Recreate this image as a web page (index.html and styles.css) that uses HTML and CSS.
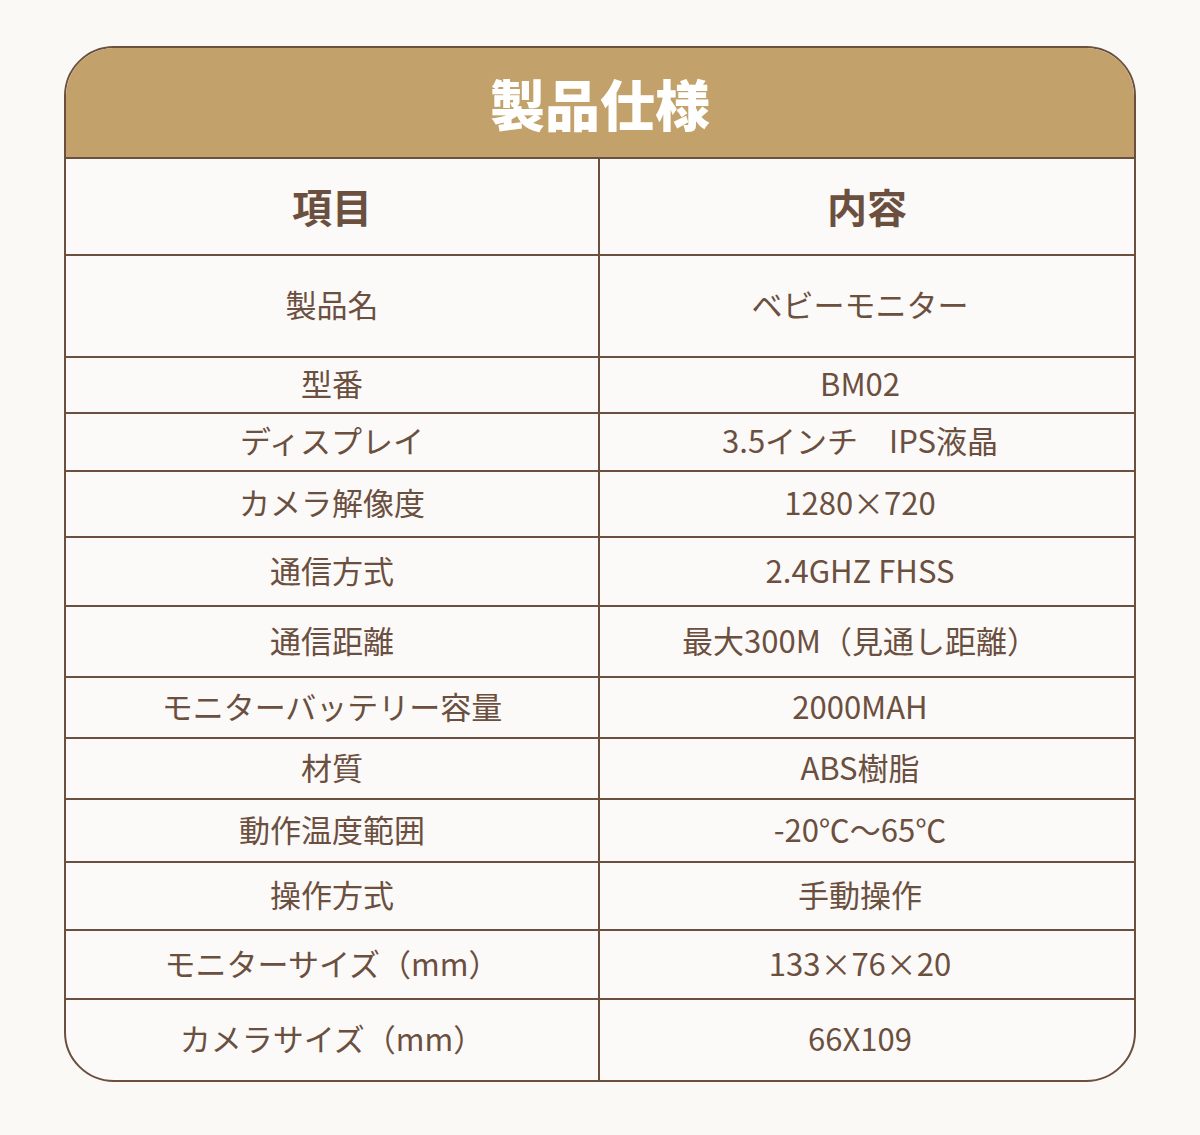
FILE: index.html
```html
<!DOCTYPE html>
<html lang="ja">
<head>
<meta charset="utf-8">
<link rel="stylesheet" href="styles.css">
</head>
<body>
<div class="card">
  <div class="title">製品仕様</div>
  <div class="table">
    <div class="cell head left">項目</div><div class="cell head">内容</div>
    <div class="cell left">製品名</div><div class="cell right">ベビーモニター</div>
    <div class="cell left">型番</div><div class="cell right">BM02</div>
    <div class="cell left">ディスプレイ</div><div class="cell right">3.5インチ　IPS液晶</div>
    <div class="cell left">カメラ解像度</div><div class="cell right">1280×720</div>
    <div class="cell left">通信方式</div><div class="cell right">2.4GHZ FHSS</div>
    <div class="cell left">通信距離</div><div class="cell right">最大300M（見通し距離）</div>
    <div class="cell left">モニターバッテリー容量</div><div class="cell right">2000MAH</div>
    <div class="cell left">材質</div><div class="cell right">ABS樹脂</div>
    <div class="cell left">動作温度範囲</div><div class="cell right">-20℃～65℃</div>
    <div class="cell left">操作方式</div><div class="cell right">手動操作</div>
    <div class="cell left">モニターサイズ（mm）</div><div class="cell right">133×76×20</div>
    <div class="cell left last">カメラサイズ（mm）</div><div class="cell right last">66X109</div>
  </div>
</div>
</body>
</html>
```
FILE: styles.css
```css
html, body {
  margin: 0;
  padding: 0;
  background: #fbf9f6;
}
body {
  font-family: "Noto Sans CJK JP", "Noto Sans", sans-serif;
  color: #6b4f3f;
}
.card {
  box-sizing: border-box;
  width: 1072px;
  margin: 46px auto 0;
  border: 2px solid #6b4f3f;
  border-radius: 50px;
  overflow: hidden;
  background: #fcfaf8;
}
.title {
  height: 109px;
  background: #c2a26a;
  border-bottom: 2px solid #6b4f3f;
  color: #ffffff;
  font-size: 55px;
  font-weight: 900;
  display: flex;
  align-items: center;
  justify-content: center;
  line-height: 1;
}
.table {
  display: grid;
  grid-template-columns: 1fr 1fr;
  grid-template-rows: 97px 102px 56px 58px 66px 69px 71px 61px 61px 63px 68px 69px 80px;
}
.cell {
  box-sizing: border-box;
  border-bottom: 2px solid #6b4f3f;
  display: flex;
  align-items: center;
  justify-content: center;
  padding-bottom: 5px;
  font-size: 31px;
  font-weight: 400;
  line-height: 1;
  white-space: nowrap;
}
.left {
  border-right: 2px solid #6b4f3f;
}
.right {
  padding-right: 14px;
}
.head {
  font-size: 40px;
  font-weight: 700;
  padding-bottom: 2px;
}
.last {
  border-bottom: none;
}
```
